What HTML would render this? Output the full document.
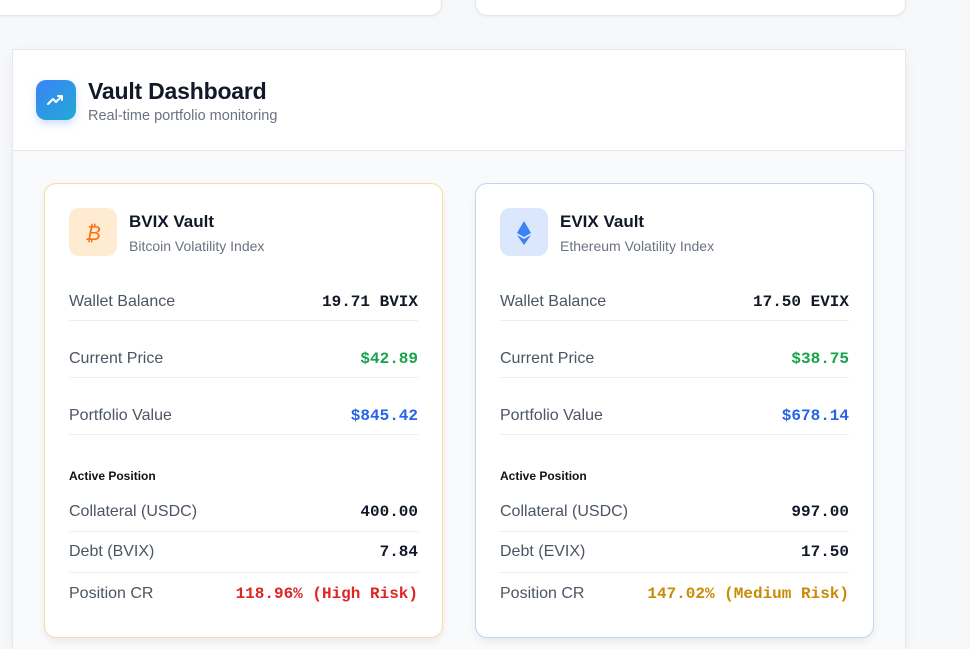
<!DOCTYPE html>
<html><head><meta charset="utf-8"><style>
*{box-sizing:border-box;margin:0;padding:0}
html,body{width:970px;height:649px;overflow:hidden}
body{background:#f7f8fa;font-family:"Liberation Sans",sans-serif;position:relative}
.top{position:absolute;top:-20px;height:36px;background:#fff;border:1px solid #e5e7eb;border-radius:12px;box-shadow:0 1px 3px rgba(0,0,0,.06)}
.panel{position:absolute;left:12px;top:49px;width:894px;height:600px;background:#f9fafb;border:1px solid #e5e7eb;border-bottom:none;box-shadow:0 4px 12px rgba(0,0,0,.05)}
.ph{position:absolute;left:0;top:0;width:892px;height:101px;background:#fff;border-bottom:1px solid #e5e7eb}
.logo{position:absolute;left:23px;top:30px;width:40px;height:40px;border-radius:10px;background:linear-gradient(135deg,#3b82f6,#22aad4);box-shadow:0 4px 8px rgba(59,130,246,.25)}
.h1{position:absolute;left:75px;top:28px;font-size:23px;font-weight:bold;color:#111827;letter-spacing:-.2px}
.sub{position:absolute;left:75px;top:58px;font-size:14.5px;color:#6b7280}
.card{position:absolute;top:183px;width:399px;height:455px;background:#fff;border-radius:12px;box-shadow:0 4px 8px rgba(0,0,0,.06)}
.ic{position:absolute;left:24px;top:24px;width:48px;height:48px;border-radius:10px}
.t{position:absolute;left:84px;top:28px;font-size:17px;font-weight:bold;color:#111827}
.s{position:absolute;left:84px;top:54px;font-size:14px;color:#6b7280}
.row{position:absolute;left:24px;width:349px;height:20px;font-size:16px;color:#4b5563;line-height:20px}
.row b{position:absolute;right:0;top:0;font-family:"Liberation Mono",monospace;font-weight:bold;font-size:16px;color:#111827}
.ln{position:absolute;left:24px;width:349px;height:1px;background:#eceef1}
.ap{position:absolute;left:24px;top:285px;font-size:12px;font-weight:bold;color:#111}
</style></head><body>
<div class="top" style="left:-10px;width:452px"></div>
<div class="top" style="left:475px;width:431px"></div>
<div class="panel">
 <div class="ph">
  <div class="logo"><svg width="40" height="40" viewBox="0 0 40 40"><path d="M12 24l5-5 3 3 6-6M22 16h4v4" fill="none" stroke="#fff" stroke-width="2" stroke-linecap="round" stroke-linejoin="round"/></svg></div>
  <div class="h1">Vault Dashboard</div>
  <div class="sub">Real-time portfolio monitoring</div>
 </div>
</div>

<div class="card" style="left:44px;border:1px solid #fcd9a5">
 <div class="ic" style="background:#ffead2"><svg width="48" height="48" viewBox="0 0 48 48"><text x="24" y="32" text-anchor="middle" font-family="DejaVu Sans,sans-serif" font-size="20" font-style="italic" fill="#f97316">₿</text></svg></div>
 <div class="t">BVIX Vault</div><div class="s">Bitcoin Volatility Index</div>
 <div class="row" style="top:108px">Wallet Balance<b>19.71 BVIX</b></div><div class="ln" style="top:136px"></div>
 <div class="row" style="top:165px">Current Price<b style="color:#16a34a">$42.89</b></div><div class="ln" style="top:193px"></div>
 <div class="row" style="top:222px">Portfolio Value<b style="color:#2563eb">$845.42</b></div><div class="ln" style="top:250px"></div>
 <div class="ap">Active Position</div>
 <div class="row" style="top:318px">Collateral (USDC)<b>400.00</b></div><div class="ln" style="top:347px"></div>
 <div class="row" style="top:358px">Debt (BVIX)<b>7.84</b></div><div class="ln" style="top:388px"></div>
 <div class="row" style="top:400px">Position CR<b style="color:#dc2626">118.96% (High Risk)</b></div>
</div>

<div class="card" style="left:475px;border:1px solid #bfd4fb">
 <div class="ic" style="background:#dbe7fd"><svg width="48" height="48" viewBox="0 0 48 48"><path d="M24 13l-7 12 7 4 7-4z" fill="#3b82f6"/><path d="M17 27l7 10 7-10-7 4z" fill="#3b82f6"/></svg></div>
 <div class="t">EVIX Vault</div><div class="s">Ethereum Volatility Index</div>
 <div class="row" style="top:108px">Wallet Balance<b>17.50 EVIX</b></div><div class="ln" style="top:136px"></div>
 <div class="row" style="top:165px">Current Price<b style="color:#16a34a">$38.75</b></div><div class="ln" style="top:193px"></div>
 <div class="row" style="top:222px">Portfolio Value<b style="color:#2563eb">$678.14</b></div><div class="ln" style="top:250px"></div>
 <div class="ap">Active Position</div>
 <div class="row" style="top:318px">Collateral (USDC)<b>997.00</b></div><div class="ln" style="top:347px"></div>
 <div class="row" style="top:358px">Debt (EVIX)<b>17.50</b></div><div class="ln" style="top:388px"></div>
 <div class="row" style="top:400px">Position CR<b style="color:#ca8a04">147.02% (Medium Risk)</b></div>
</div>
</body></html>
